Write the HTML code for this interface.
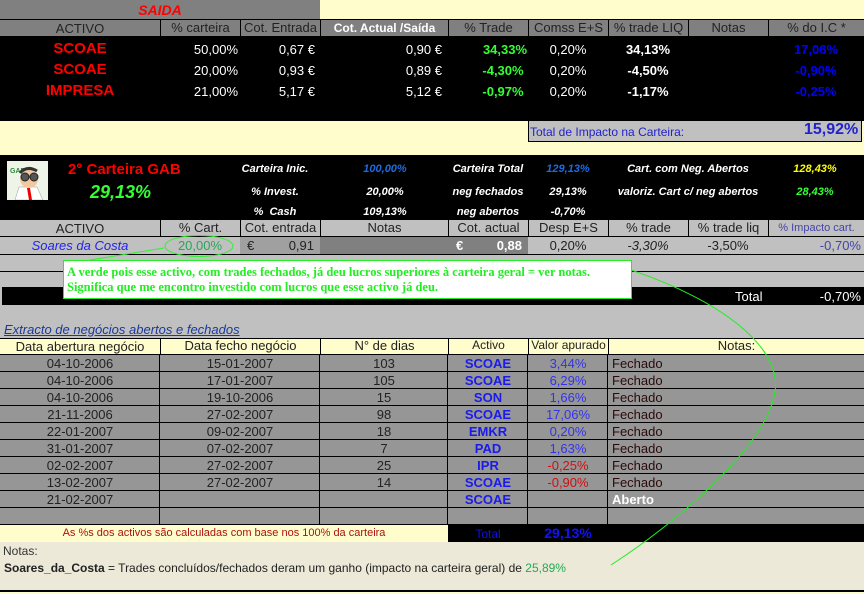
<!DOCTYPE html>
<html><head><meta charset="utf-8"><style>
*{margin:0;padding:0;box-sizing:border-box}
body{width:864px;height:594px;position:relative;overflow:hidden;background:#fffdcc;font-family:"Liberation Sans",sans-serif;font-size:12px;color:#222}
.a{position:absolute;white-space:nowrap}
.c{text-align:center}.r{text-align:right}
.b{font-weight:bold}.i{font-style:italic}
.bl{border-left:1px solid #000}
</style></head><body>

<!-- top section -->
<div class="a" style="left:0;top:0;width:320px;height:19px;background:#808080"></div>
<div class="a c b i" style="left:0;top:2px;width:320px;color:#ff0000;font-size:14px">SAIDA</div>
<div class="a" style="left:0;top:19px;width:864px;height:1px;background:#000"></div>
<div class="a" style="left:0;top:20px;width:864px;height:16px;background:#808080"></div>
<div class="a c" style="left:0;top:21px;width:160px;font-size:13px">ACTIVO</div>
<div class="a c bl" style="left:160px;top:20px;width:80px;height:16px;font-size:13px">% carteira</div>
<div class="a c bl" style="left:240px;top:20px;width:80px;height:16px;font-size:13px">Cot. Entrada</div>
<div class="a c bl b" style="left:320px;top:20px;width:128px;height:16px;font-size:12px;color:#fff;padding-top:1px">Cot. Actual /Saída</div>
<div class="a c bl" style="left:448px;top:20px;width:80px;height:16px;font-size:13px">% Trade</div>
<div class="a c bl" style="left:528px;top:20px;width:80px;height:16px;font-size:13px">Comss E+S</div>
<div class="a c bl" style="left:608px;top:20px;width:80px;height:16px;font-size:13px">% trade LIQ</div>
<div class="a c bl" style="left:688px;top:20px;width:80px;height:16px;font-size:13px">Notas</div>
<div class="a c bl" style="left:768px;top:20px;width:96px;height:16px;font-size:13px">% do I.C *</div>
<div class="a" style="left:0;top:36px;width:864px;height:85px;background:#000"></div>

<div class="a c b" style="left:0;top:40px;width:160px;color:#ff0000;font-size:15px">SCOAE</div>
<div class="a c b" style="left:0;top:61px;width:160px;color:#ff0000;font-size:15px">SCOAE</div>
<div class="a c b" style="left:0;top:82px;width:160px;color:#ff0000;font-size:15px">IMPRESA</div>
<div class="a r" style="left:160px;top:42px;width:78px;color:#fff;font-size:13px">50,00%</div>
<div class="a r" style="left:160px;top:63px;width:78px;color:#fff;font-size:13px">20,00%</div>
<div class="a r" style="left:160px;top:84px;width:78px;color:#fff;font-size:13px">21,00%</div>
<div class="a r" style="left:240px;top:42px;width:75px;color:#fff;font-size:13px">0,67 €</div>
<div class="a r" style="left:240px;top:63px;width:75px;color:#fff;font-size:13px">0,93 €</div>
<div class="a r" style="left:240px;top:84px;width:75px;color:#fff;font-size:13px">5,17 €</div>
<div class="a r" style="left:320px;top:42px;width:122px;color:#fff;font-size:13px">0,90 €</div>
<div class="a r" style="left:320px;top:63px;width:122px;color:#fff;font-size:13px">0,89 €</div>
<div class="a r" style="left:320px;top:84px;width:122px;color:#fff;font-size:13px">5,12 €</div>
<div class="a c b" style="left:448px;top:42px;width:114px;color:#33ff33;font-size:13px">34,33%</div>
<div class="a c b" style="left:448px;top:63px;width:110px;color:#33ff33;font-size:13px">-4,30%</div>
<div class="a c b" style="left:448px;top:84px;width:110px;color:#33ff33;font-size:13px">-0,97%</div>
<div class="a c" style="left:528px;top:42px;width:80px;color:#fff;font-size:13px">0,20%</div>
<div class="a c" style="left:528px;top:63px;width:80px;color:#fff;font-size:13px">0,20%</div>
<div class="a c" style="left:528px;top:84px;width:80px;color:#fff;font-size:13px">0,20%</div>
<div class="a c b" style="left:608px;top:42px;width:80px;color:#fff;font-size:13px">34,13%</div>
<div class="a c b" style="left:608px;top:63px;width:80px;color:#fff;font-size:13px">-4,50%</div>
<div class="a c b" style="left:608px;top:84px;width:80px;color:#fff;font-size:13px">-1,17%</div>
<div class="a c b" style="left:768px;top:42px;width:96px;color:#0000ff;font-size:13px">17,06%</div>
<div class="a c b" style="left:768px;top:63px;width:96px;color:#0000ff;font-size:13px">-0,90%</div>
<div class="a c b" style="left:768px;top:84px;width:96px;color:#0000ff;font-size:13px">-0,25%</div>

<div class="a" style="left:528px;top:121px;width:334px;height:21px;background:#c0c0c0;border:1px solid #000;border-top:none"></div>
<div class="a" style="left:530px;top:125px;color:#2222cc;font-size:12px">Total de Impacto na Carteira:</div>
<div class="a b" style="left:804px;top:121px;color:#2222cc;font-size:16px">15,92%</div>

<!-- second section -->
<div class="a" style="left:0;top:155px;width:864px;height:65px;background:#000"></div>
<svg class="a" style="left:7px;top:161px" width="41" height="39" viewBox="0 0 41 39">
<rect width="41" height="39" fill="#eef5e8"/>
<text x="3" y="12" font-size="7" fill="#2a8a3a" font-family="Liberation Sans" font-weight="bold">GAB</text>
<path d="M8 39 L12 26 L30 26 L36 39Z" fill="#fff" stroke="#999" stroke-width=".5"/>
<path d="M20 27 L22 39 L25 39 L23 27Z" fill="#e00"/>
<ellipse cx="22" cy="18" rx="9" ry="9" fill="#f1c8a0"/>
<path d="M13 12 Q20 4 30 10" stroke="#333" stroke-width="3" fill="none"/>
<circle cx="18" cy="16" r="4" fill="#555" stroke="#222"/><circle cx="27" cy="16" r="4" fill="#555" stroke="#222"/>
</svg>
<div class="a b" style="left:68px;top:161px;color:#ff0000;font-size:15px">2° Carteira GAB</div>
<div class="a b i" style="left:90px;top:182px;color:#33ff33;font-size:18px">29,13%</div>
<div class="a b i c" style="left:230px;top:163px;width:90px;color:#fff;font-size:11px">Carteira Inic.</div>
<div class="a b i c" style="left:230px;top:186px;width:90px;color:#fff;font-size:11px">% Invest.</div>
<div class="a b i c" style="left:230px;top:206px;width:90px;color:#fff;font-size:11px">%&nbsp; Cash</div>
<div class="a b i c" style="left:340px;top:163px;width:90px;color:#1e6be0;font-size:11px">100,00%</div>
<div class="a b i c" style="left:340px;top:186px;width:90px;color:#fff;font-size:11px">20,00%</div>
<div class="a b i c" style="left:340px;top:206px;width:90px;color:#fff;font-size:11px">109,13%</div>
<div class="a b i c" style="left:443px;top:163px;width:90px;color:#fff;font-size:11px">Carteira Total</div>
<div class="a b i c" style="left:443px;top:186px;width:90px;color:#fff;font-size:11px">neg fechados</div>
<div class="a b i c" style="left:443px;top:206px;width:90px;color:#fff;font-size:11px">neg abertos</div>
<div class="a b i c" style="left:523px;top:163px;width:90px;color:#1e6be0;font-size:11px">129,13%</div>
<div class="a b i c" style="left:523px;top:186px;width:90px;color:#fff;font-size:11px">29,13%</div>
<div class="a b i c" style="left:523px;top:206px;width:90px;color:#fff;font-size:11px">-0,70%</div>
<div class="a b i c" style="left:620px;top:163px;width:136px;color:#fff;font-size:11px">Cart. com Neg. Abertos</div>
<div class="a b i c" style="left:610px;top:186px;width:156px;color:#fff;font-size:11px">valoriz. Cart c/ neg abertos</div>
<div class="a b i c" style="left:775px;top:163px;width:80px;color:#ffff00;font-size:11px">128,43%</div>
<div class="a b i c" style="left:775px;top:186px;width:80px;color:#33ff33;font-size:11px">28,43%</div>

<div class="a" style="left:0;top:220px;width:864px;height:118px;background:#c0c0c0"></div>
<div class="a c" style="left:0;top:221px;width:160px;font-size:13px">ACTIVO</div>
<div class="a c bl" style="left:160px;top:220px;width:80px;height:16px;font-size:13px">% Cart.</div>
<div class="a c bl" style="left:240px;top:220px;width:80px;height:16px;font-size:13px">Cot. entrada</div>
<div class="a c bl" style="left:320px;top:220px;width:128px;height:16px;font-size:13px">Notas</div>
<div class="a c bl" style="left:448px;top:220px;width:80px;height:16px;font-size:13px">Cot. actual</div>
<div class="a c bl" style="left:528px;top:220px;width:80px;height:16px;font-size:13px">Desp E+S</div>
<div class="a c bl" style="left:608px;top:220px;width:80px;height:16px;font-size:13px">% trade</div>
<div class="a c bl" style="left:688px;top:220px;width:80px;height:16px;font-size:13px">% trade liq</div>
<div class="a c bl" style="left:768px;top:220px;width:96px;height:16px;font-size:11px;color:#4444aa;padding-top:2px">% Impacto cart.</div>
<div class="a" style="left:0;top:236px;width:864px;height:1px;background:#000"></div>
<div class="a" style="left:240px;top:237px;width:80px;height:17px;background:#a0a0a0"></div>
<div class="a" style="left:320px;top:237px;width:208px;height:17px;background:#808080"></div>
<div class="a c i" style="left:0;top:238px;width:160px;color:#2222ee;font-size:13px">Soares da Costa</div>
<div class="a c" style="left:160px;top:238px;width:80px;color:#22aa55;font-size:13px">20,00%</div>
<div class="a" style="left:247px;top:238px;font-size:13px">€</div>
<div class="a r" style="left:240px;top:238px;width:74px;font-size:13px">0,91</div>
<div class="a b" style="left:456px;top:238px;color:#fff;font-size:13px">€</div>
<div class="a r b" style="left:448px;top:238px;width:74px;color:#fff;font-size:13px">0,88</div>
<div class="a c" style="left:528px;top:238px;width:80px;font-size:13px">0,20%</div>
<div class="a c i" style="left:608px;top:238px;width:80px;font-size:13px">-3,30%</div>
<div class="a c" style="left:688px;top:238px;width:80px;font-size:13px">-3,50%</div>
<div class="a r" style="left:768px;top:238px;width:93px;color:#4444aa;font-size:13px">-0,70%</div>
<div class="a" style="left:0;top:254px;width:864px;height:1px;background:#000"></div>
<div class="a" style="left:0;top:271px;width:864px;height:1px;background:#000"></div>
<div class="a" style="left:2px;top:287px;width:862px;height:18px;background:#000"></div>
<div class="a" style="left:735px;top:289px;color:#fff;font-size:13px">Total</div>
<div class="a r" style="left:768px;top:289px;width:93px;color:#fff;font-size:13px">-0,70%</div>

<div class="a i" style="left:4px;top:322px;color:#1a3a99;font-size:13px;text-decoration:underline">Extracto de negócios abertos e fechados</div>

<!-- bottom table -->
<div class="a" style="left:0;top:338px;width:864px;height:17px;background:#fffdcc;border-top:1px solid #000;border-bottom:1px solid #000"></div>
<div class="a c" style="left:0;top:339px;width:160px;font-size:13px">Data abertura negócio</div>
<div class="a c bl" style="left:160px;top:338px;width:160px;height:17px;font-size:13px">Data fecho negócio</div>
<div class="a c bl" style="left:320px;top:338px;width:128px;height:17px;font-size:13px">N° de dias</div>
<div class="a c bl" style="left:448px;top:338px;width:80px;height:17px;font-size:12px">Activo</div>
<div class="a c bl" style="left:528px;top:338px;width:80px;height:17px;font-size:12px">Valor apurado</div>
<div class="a c bl" style="left:608px;top:338px;width:256px;height:17px;font-size:13px">Notas:</div>
<div class="a" style="left:0;top:355px;width:864px;height:170px;background:#969696;
background-image:repeating-linear-gradient(to bottom,transparent 0 16px,#000 16px 17px),linear-gradient(to right,transparent 159px,#000 159px 160px,transparent 160px 319px,#000 319px 320px,transparent 320px 447px,#000 447px 448px,transparent 448px 527px,#000 527px 528px,transparent 528px 607px,#000 607px 608px,transparent 608px)"></div>

<div id="rows"></div>

<div class="a" style="left:0;top:525px;width:448px;height:17px;background:#fffdcc"></div>
<div class="a" style="left:448px;top:525px;width:416px;height:17px;background:#000"></div>
<div class="a c" style="left:0;top:527px;width:448px;color:#aa1111;font-size:11px">As %s dos activos são calculadas com base nos 100% da carteira</div>
<div class="a c" style="left:448px;top:527px;width:80px;color:#1111dd;font-size:12px">Total</div>
<div class="a c b" style="left:528px;top:525px;width:80px;color:#1111ff;font-size:14px">29,13%</div>

<div class="a" style="left:0;top:542px;width:864px;height:50px;background:#ece9d8;border-bottom:2px solid #000"></div>
<div class="a" style="left:3px;top:544px;color:#333;font-size:12px">Notas:</div>
<div class="a" style="left:4px;top:561px;font-size:12px;color:#222"><b>Soares_da_Costa</b> = Trades concluídos/fechados deram um ganho (impacto na carteira geral) de <span style="color:#22aa55">25,89%</span></div>

<!-- annotation overlay -->
<svg class="a" style="left:0;top:0" width="864" height="594">
<ellipse cx="199" cy="246" rx="34" ry="10.5" fill="none" stroke="#33ee33" stroke-width="1"/>
<line x1="164" y1="248" x2="90" y2="260" stroke="#33ee33"/>
<path d="M631 270 C720 300 790 350 773 400 C760 450 680 520 611 565" fill="none" stroke="#22ee22" stroke-width="1"/>
<rect x="63.5" y="260.5" width="568" height="38" fill="#fff" stroke="#22ee22" stroke-width="1"/>
<text x="67" y="276" font-family="Liberation Serif,serif" font-weight="bold" font-size="12.5" fill="#22ee22">A verde pois esse activo, com trades fechados, já deu lucros superiores à carteira geral =  ver notas.</text>
<text x="67" y="291" font-family="Liberation Serif,serif" font-weight="bold" font-size="12.5" fill="#22ee22">Significa que  me encontro investido com lucros que esse activo já deu.</text>
</svg>

<script>
var d=[["04-10-2006","15-01-2007","103","SCOAE","3,44%","Fechado"],
["04-10-2006","17-01-2007","105","SCOAE","6,29%","Fechado"],
["04-10-2006","19-10-2006","15","SON","1,66%","Fechado"],
["21-11-2006","27-02-2007","98","SCOAE","17,06%","Fechado"],
["22-01-2007","09-02-2007","18","EMKR","0,20%","Fechado"],
["31-01-2007","07-02-2007","7","PAD","1,63%","Fechado"],
["02-02-2007","27-02-2007","25","IPR","-0,25%","Fechado"],
["13-02-2007","27-02-2007","14","SCOAE","-0,90%","Fechado"],
["21-02-2007","","","SCOAE","","Aberto"]];
var h="";
d.forEach(function(r,i){var y=356+i*17;
h+='<div class="a c" style="left:0;top:'+y+'px;width:160px;font-size:13px">'+r[0]+'</div>';
h+='<div class="a c" style="left:160px;top:'+y+'px;width:160px;font-size:13px">'+r[1]+'</div>';
h+='<div class="a c" style="left:320px;top:'+y+'px;width:128px;font-size:13px">'+r[2]+'</div>';
h+='<div class="a c b" style="left:448px;top:'+y+'px;width:80px;font-size:13px;color:#1a1aee">'+r[3]+'</div>';
h+='<div class="a c" style="left:528px;top:'+y+'px;width:80px;font-size:13px;color:'+(r[4][0]=="-"?"#cc1111":"#3333ee")+'">'+r[4]+'</div>';
h+='<div class="a'+(r[5]=="Aberto"?' b':'')+'" style="left:612px;top:'+y+'px;font-size:13px;color:'+(r[5]=="Aberto"?"#fff":"#2a0a0a")+'">'+r[5]+'</div>';});
document.getElementById("rows").innerHTML=h;
</script>
</body></html>
